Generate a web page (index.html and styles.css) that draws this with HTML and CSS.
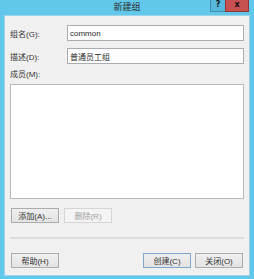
FILE: index.html
```html
<!DOCTYPE html>
<html lang="zh-CN">
<head>
    <meta charset="UTF-8">
    <meta name="viewport" content="width=device-width, initial-scale=1.0">
    <title>新建组</title>
    <link rel="stylesheet" href="styles.css">
</head>
<body>
    <div class="window">
        <div class="titlebar">
            <span></span>
            <span class="title">新建组</span>
            <div class="caption-buttons">
                <span class="cap-btn help">?</span>
                <span class="cap-btn close">x</span>
            </div>
        </div>

        <div class="client">
            <div class="field-row first">
                <label class="field-label">组名(G):</label>
                <input class="text-input" type="text" value="common">
            </div>
            <div class="field-row">
                <label class="field-label">描述(D):</label>
                <input class="text-input" type="text" value="普通员工组">
            </div>

            <div class="members-label">成员(M):</div>
            <div class="listbox"></div>

            <div class="button-row">
                <button class="btn">添加(A)...</button>
                <button class="btn" disabled>删除(R)</button>
            </div>

            <div class="separator"></div>

            <div class="footer">
                <button class="btn">帮助(H)</button>
                <span class="spacer"></span>
                <button class="btn default">创建(C)</button>
                <button class="btn">关闭(O)</button>
            </div>
        </div>
    </div>
</body>
</html>
```

FILE: styles.css
```css
* {
    box-sizing: border-box;
}

body {
    margin: 0;
    font-family: "Liberation Sans", "Noto Sans CJK SC", sans-serif;
    font-size: 8px;
    color: #333;
}

.window {
    width: 254px;
    height: 279px;
    background-color: #62c8eb;
    padding: 0 4px 4px 4px;
    display: flex;
    flex-direction: column;
}

/* title bar */
.titlebar {
    height: 15px;
    display: grid;
    grid-template-columns: 1fr auto 1fr;
    align-items: start;
    margin: 0 -4px;
}

.title {
    font-size: 9px;
    line-height: 15px;
    color: #2a2a2a;
}

.caption-buttons {
    justify-self: end;
    display: flex;
    margin-right: 5px;
}

.cap-btn {
    height: 12px;
    font-family: "DejaVu Sans", sans-serif;
    font-weight: bold;
    font-size: 8px;
    line-height: 10px;
    text-align: center;
    color: #111;
}

.cap-btn.help {
    width: 15px;
    background-color: #55b8dc;
    border: 1px solid #3f8cab;
    border-top: none;
    border-right: none;
}

.cap-btn.close {
    width: 24px;
    background-color: #c75050;
    border: 1px solid #8f3535;
    border-top: none;
}

/* client area */
.client {
    flex: 1;
    background-color: #f0f0f0;
    border: 1px solid #9fd3e6;
    padding: 0 5px 7px 5px;
    display: flex;
    flex-direction: column;
}

.field-row {
    display: flex;
    align-items: center;
    margin-top: 7px;
}

.field-row.first {
    margin-top: 9px;
}

.field-label {
    width: 57px;
    flex-shrink: 0;
}

.text-input {
    flex: 1;
    height: 16px;
    border: 1px solid #abadb3;
    background-color: #fff;
    padding: 0 2px;
    font-family: "Liberation Sans", "Noto Sans CJK SC", sans-serif;
    font-size: 8px;
    color: #2a2a2a;
    outline: none;
}

.members-label {
    margin-top: 5px;
    line-height: 12px;
    margin-bottom: 3px;
}

.listbox {
    height: 115px;
    background-color: #fff;
    border: 1px solid #b9b9b9;
}

.button-row {
    display: flex;
    gap: 5px;
    margin-top: 9px;
    padding-left: 1px;
}

.btn {
    width: 48px;
    height: 15px;
    padding: 0;
    font-family: "Liberation Sans", "Noto Sans CJK SC", sans-serif;
    font-size: 8px;
    color: #333;
    background: linear-gradient(#efefef, #e3e3e3);
    border: 1px solid #acacac;
}

.btn:disabled {
    background: #f4f4f4;
    border-color: #d5d5d5;
    color: #a3a3a3;
}

.btn.default {
    border-color: #7ea6cf;
}

.separator {
    height: 2px;
    margin-top: 14px;
    background-color: #dcdcdc;
}

.footer {
    display: flex;
    gap: 4px;
    margin-top: 14px;
    padding: 0 1px;
}

.spacer {
    flex: 1;
}
```
